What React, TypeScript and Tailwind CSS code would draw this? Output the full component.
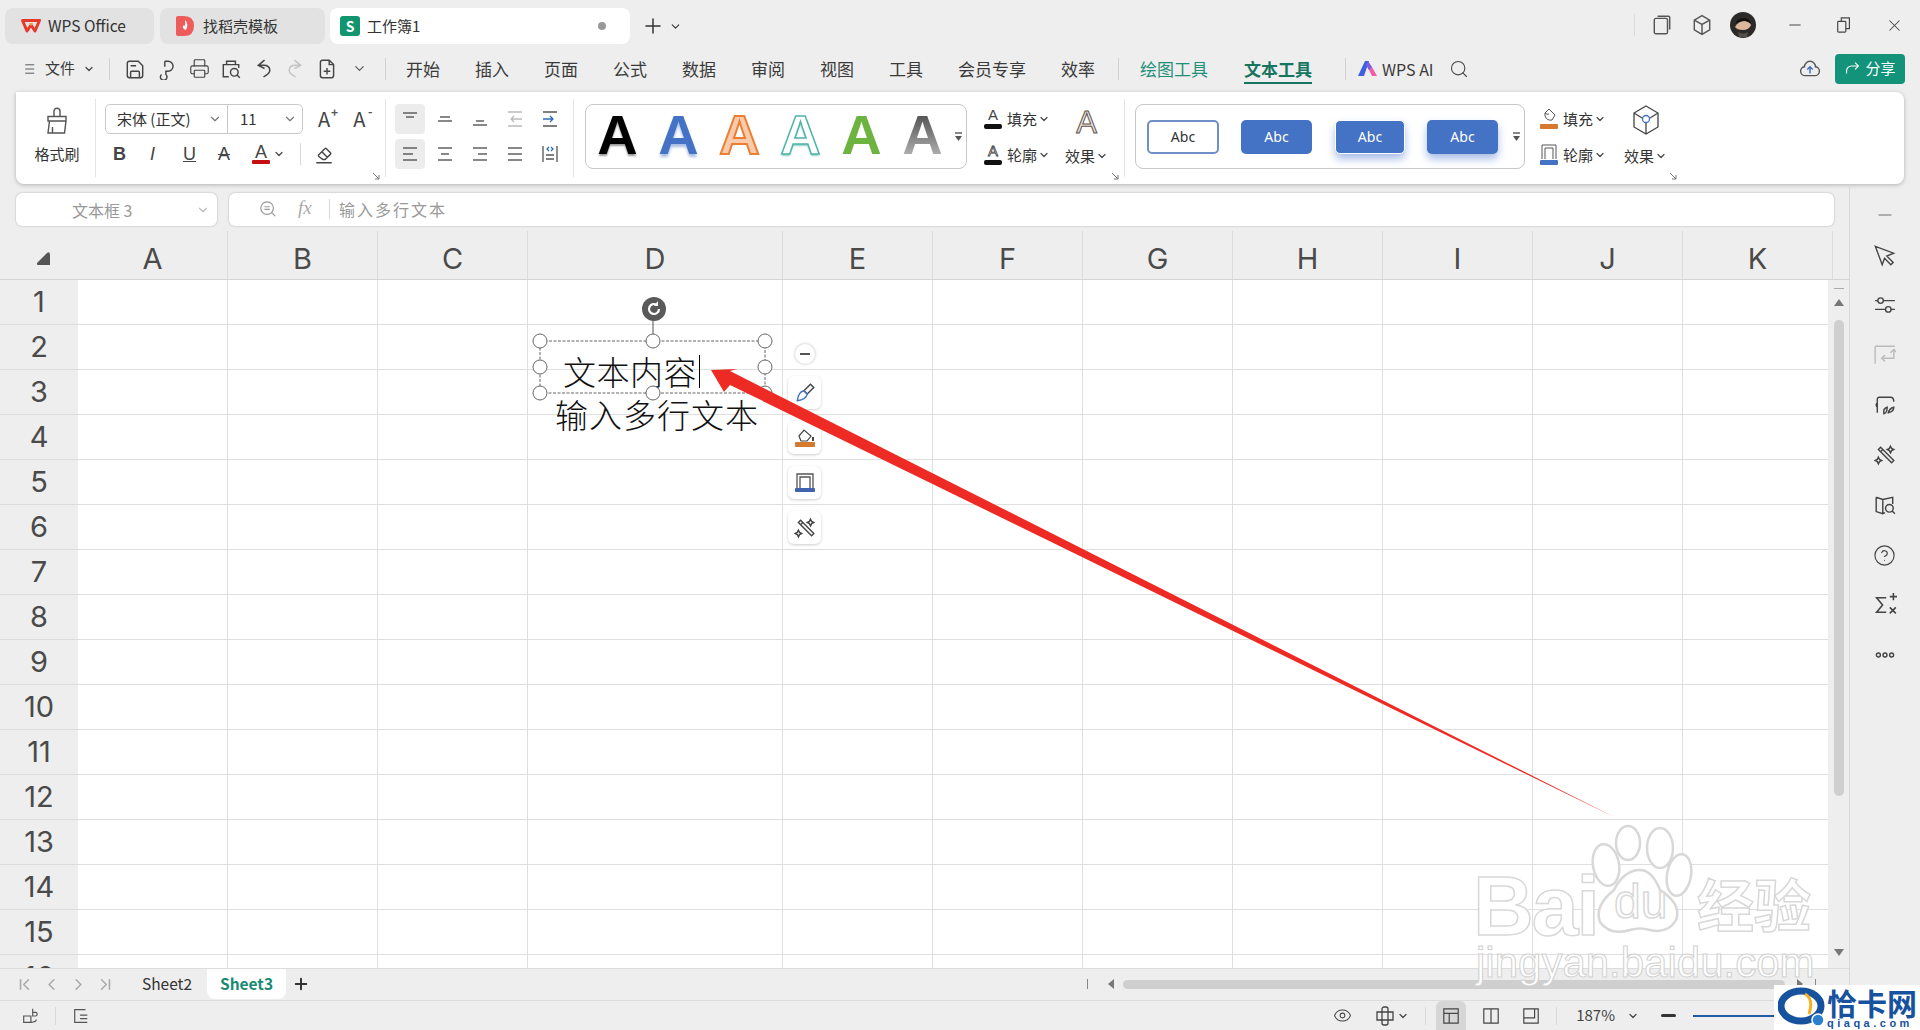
import type { ReactNode } from "react";
import { ChevronDown, Plus, Search, Eye, X, Minus, Printer, CircleHelp, ChevronLeft, ChevronRight, ChevronFirst, ChevronLast } from "lucide-react";

const CJK = "font-['Noto_Sans_CJK_SC','Noto_Sans',sans-serif]";

function Ico({ size = 20, children, className, stroke = "#444", sw = 1.3 }: { size?: number; children: ReactNode; className?: string; stroke?: string; sw?: number }) {
  return (
    <svg width={size} height={size} viewBox="0 0 20 20" fill="none" stroke={stroke} strokeWidth={sw} className={className}>
      {children}
    </svg>
  );
}

// stacked horizontal strokes used by all the alignment buttons
function Lines({ rows, stroke = "#555" }: { rows: [number, number, number][]; stroke?: string }) {
  return (
    <Ico size={20} stroke={stroke} sw={1.4}>
      {rows.map(([a, y, b], i) => (
        <line key={i} x1={a} x2={b} y1={y} y2={y} />
      ))}
    </Ico>
  );
}

function Tiny({ className = "" }: { className?: string }) {
  return <ChevronDown size={12} strokeWidth={2.4} className={"text-[#444] " + className} />;
}

function Launcher({ className = "right-[4px]" }: { className?: string }) {
  return (
    <svg width="9" height="9" viewBox="0 0 9 9" fill="none" stroke="#777" strokeWidth="1" className={"absolute -bottom-[4px] " + className}>
      <path d="M1 1l6 6M7 3v4H3" />
    </svg>
  );
}

// the little "more styles" control at the right end of a gallery box
function GalleryMore() {
  return (
    <svg width="9" height="10" viewBox="0 0 9 10" className="absolute right-[3px] top-[27px]">
      <path d="M1 1h7" stroke="#555" strokeWidth="1.4" />
      <path d="M1 4h7L4.500 9z" fill="#555" />
    </svg>
  );
}

const COLUMNS = [
  { label: "A", cls: "w-[150px]" },
  { label: "B", cls: "w-[150px]" },
  { label: "C", cls: "w-[150px]" },
  { label: "D", cls: "w-[255px]" },
  { label: "E", cls: "w-[150px]" },
  { label: "F", cls: "w-[150px]" },
  { label: "G", cls: "w-[150px]" },
  { label: "H", cls: "w-[150px]" },
  { label: "I", cls: "w-[150px]" },
  { label: "J", cls: "w-[150px]" },
  { label: "K", cls: "w-[150px]" },
];
const ROWS = Array.from({ length: 16 }, (_, i) => i + 1);
const MENU = ["开始", "插入", "页面", "公式", "数据", "审阅", "视图", "工具", "会员专享", "效率"];

function TitleBar() {
  return (
    <div className="flex h-[50px] shrink-0 items-start pl-[5px] pt-2">
      <div className="flex h-9 w-[149px] items-center rounded-lg bg-[#e2e2e2] pl-4 text-[15.5px] text-[#333]">
        <svg width="20" height="14" viewBox="0 0 20 14" fill="none" className="mr-[7px]">
          <path d="M1.500 1.500L6 12l4-6 4 6 4.500-10.500z" stroke="#e5392b" strokeWidth="3" strokeLinejoin="round" />
          <path d="M8 4h4l-2 3z" fill="#f4a23b" />
        </svg>
        WPS Office
      </div>
      <div className="ml-[6px] flex h-9 w-[165px] items-center rounded-lg bg-[#e2e2e2] pl-4 text-[15px] text-[#333]">
        <svg width="18" height="20" viewBox="0 0 18 20" className="mr-[9px]">
          <path d="M0 2q0-2 2-2h6q10 0 10 10T8 20H2q-2 0-2-2z" fill="#ee5b5b" />
          <path d="M9 4q4 4 1 10-4-1-3-5 1 1 1 2 2-3 1-7" fill="#fff" />
        </svg>
        找稻壳模板
      </div>
      <div className="ml-[5px] flex h-9 w-[300px] items-center rounded-lg bg-white pl-[10px] text-[15px] text-[#333]">
        <span className="mr-[7px] flex h-5 w-5 items-center justify-center rounded-[3px] bg-[#11956f] text-[14px] font-bold leading-none text-white">S</span>
        工作簿1
        <span className="ml-[178px] h-2 w-2 rounded-full bg-[#999]" />
      </div>
      <div className="ml-[11px] flex h-9 items-center text-[#333]">
        <Plus size={24} strokeWidth={1.5} />
        <ChevronDown size={13} strokeWidth={2} className="ml-[4px]" />
      </div>
      <div className="ml-auto flex h-[34px] items-center pr-4">
        <div className="mr-4 h-[22px] w-px bg-[#dcdcdc]" />
        <Ico size={22} stroke="#555" className="mr-[18px]">
          <rect x="3" y="4" width="12" height="14" rx="1.5" />
          <path d="M6 2h10q1 0 1 1v11" />
        </Ico>
        <Ico size={22} stroke="#555" className="mr-[17px]">
          <path d="M10 1.500l7 4v9l-7 4-7-4v-9zM3 5.500l7 4 7-4M10 9.500v9" />
        </Ico>
        <svg width="26" height="26" viewBox="0 0 26 26" className="mr-[30px]">
          <circle cx="13" cy="13" r="13" fill="#2c2a28" />
          <path d="M5 15q3-6 10-6 5 0 6 4-2 5-8 5-6 0-8-3z" fill="#dcb79c" />
          <path d="M5 12q3-7 10-6 5 1 6 6-6-4-9-3-4 1-7 3z" fill="#141210" />
          <path d="M8 20q5 3 10 0l-1 5H9z" fill="#55504a" />
        </svg>
        <Minus size={18} strokeWidth={1.3} className="mr-[31px] text-[#444]" />
        <Ico size={18} stroke="#444" className="mr-[32px]">
          <rect x="3" y="6" width="9" height="12" rx="1" />
          <path d="M7 6V2h9v12h-4" />
        </Ico>
        <X size={19} strokeWidth={1.3} className="text-[#444]" />
      </div>
    </div>
  );
}

function MenuBar() {
  return (
    <div className="flex h-[42px] shrink-0 items-center pb-[5px] text-[17px] text-[#3a3a3a]">
      <Ico size={12} stroke="#555" sw={1.6} className="ml-[24px]">
        <path d="M2 3h15M2 10h15M2 17h15" />
      </Ico>
      <span className="ml-[9px] text-[15px]">文件</span>
      <Tiny className="ml-2" />
      <div className="ml-[14px] mr-[9px] h-[22px] w-px bg-[#d2d2d2]" />
      <span className="flex w-[32px] justify-center">
        <Ico size={22}>
          <path d="M3 5q0-2 2-2h8l4 4v9q0 2-2 2H5q-2 0-2-2zM6 18v-5q0-1 1-1h6q1 0 1 1v5M6 7h5" />
        </Ico>
      </span>
      <span className="flex w-[32px] justify-center">
        <Ico size={22}>
          <path d="M8 3h3a4 4 0 010 9H9v3a3 3 0 11-4 0M8 3v5" />
        </Ico>
      </span>
      <span className="flex w-[32px] justify-center">
        <Printer size={21} strokeWidth={1.3} color="#444" />
      </span>
      <span className="flex w-[32px] justify-center">
        <Ico size={22}>
          <path d="M6 6V3h8v3M8 17H3V6h14v3" />
          <circle cx="13" cy="13" r="3.500" />
          <path d="M15.500 15.500L18 18" />
        </Ico>
      </span>
      <span className="flex w-[32px] justify-center">
        <Ico size={21} sw={1.4}>
          <path d="M11 2L5 7l6 3M5 7h5q6 0 6 5 0 3-6 6" />
        </Ico>
      </span>
      <span className="flex w-[32px] justify-center">
        <Ico size={21} sw={1.4} stroke="#c4c4c4">
          <path d="M9 2l6 5-6 3M15 7h-5q-6 0-6 5 0 3 6 6" />
        </Ico>
      </span>
      <span className="flex w-[32px] justify-center">
        <Ico size={22}>
          <path d="M4 4q0-2 2-2h6l4 4v10q0 2-2 2H6q-2 0-2-2zM12 2v4h4M10 9v6M7 12h6" />
        </Ico>
      </span>
      <span className="flex w-[32px] justify-center">
        <ChevronDown size={15} color="#555" strokeWidth={1.8} />
      </span>
      <div className="ml-[10px] mr-[20px] h-[22px] w-px bg-[#d2d2d2]" />
      <div className="flex items-center gap-[35px]">
        {MENU.map((m) => (
          <span key={m}>{m}</span>
        ))}
      </div>
      <div className="ml-[23px] mr-[21px] h-[22px] w-px bg-[#d2d2d2]" />
      <span className="text-[#1f8f78]">绘图工具</span>
      <span className="relative ml-[36px] font-bold text-[#17755f]">
        文本工具
        <span className="absolute -bottom-[3px] left-0 h-[2px] w-full bg-[#17755f]" />
      </span>
      <div className="ml-[33px] mr-[12px] h-[22px] w-px bg-[#d2d2d2]" />
      <svg width="19" height="15" viewBox="0 0 19 15" className="mr-[5px]">
        <path d="M0 15L7 0h4L6 15z" fill="#3d5fe0" />
        <path d="M9 5l5 10h5l-5-9z" fill="#ef5fa7" />
        <path d="M8 4l2-4 4 6-3 3z" fill="#7c5ce0" />
      </svg>
      <span className="text-[16px]">WPS AI</span>
      <Search size={20} strokeWidth={1.3} className="ml-[15px] text-[#444]" />
      <div className="ml-auto flex items-center pr-[15px]">
        <Ico size={22} stroke="#555" className="mr-[14px]">
          <path d="M6 16a4 4 0 01-1-8 5 5 0 0110 0 4 4 0 01-1 8z" />
          <path d="M10 14V8M7.500 10.500L10 8l2.500 2.500" stroke="#3f6fc4" />
        </Ico>
        <div className="flex h-[30px] w-[70px] items-center justify-center rounded-[4px] bg-[#12937a] text-[15px] text-white">
          <Ico size={17} stroke="#fff" className="mr-1">
            <path d="M13 3l4 4-4 4M17 7H9a6 6 0 00-6 6v3" />
          </Ico>
          分享
        </div>
      </div>
    </div>
  );
}

function FontGroup() {
  return (
    <div className="relative w-[290px] shrink-0 border-r border-[#e4e4e4] pl-[9px]">
      <div className="flex items-center pt-[5px]">
        <div className="flex h-[30px] w-[198px] items-center rounded-[5px] border border-[#c8c8c8] text-[15px] text-[#333]">
          <div className="flex h-full w-[122px] items-center justify-between border-r border-[#c8c8c8] pl-[11px] pr-[5px]">
            宋体 (正文)
            <ChevronDown size={14} color="#777" />
          </div>
          <div className="flex flex-1 items-center justify-between pl-[12px] pr-[5px]">
            11
            <ChevronDown size={14} color="#777" />
          </div>
        </div>
        <span className="relative ml-[15px] text-[20px] leading-none text-[#444]">
          A<span className="absolute -right-[8px] -top-[3px] text-[12px] font-bold text-[#555]">+</span>
        </span>
        <span className="relative ml-[23px] text-[20px] leading-none text-[#444]">
          A<span className="absolute -right-[7px] -top-[4px] text-[12px] font-bold text-[#555]">-</span>
        </span>
      </div>
      <div className="mt-[5px] flex h-[30px] items-center font-['Liberation_Sans',sans-serif] text-[18px] text-[#444]">
        <span className="ml-[8px] w-[18px] font-bold">B</span>
        <span className="ml-[19px] w-[14px] italic">I</span>
        <span className="ml-[19px] w-[14px] underline">U</span>
        <span className="ml-[21px] w-[14px] line-through">A</span>
        <span className="ml-[21px] flex w-[16px] flex-col items-center leading-[16px]">
          A<span className="h-[4px] w-[18px] rounded-[1px] bg-[#c60f13]" />
        </span>
        <Tiny className="ml-[4px]" />
        <div className="ml-[15px] mr-[12px] h-[22px] w-px bg-[#d8d8d8]" />
        <Ico size={22} stroke="#444">
          <path d="M5 11l6-6a1 1 0 011 0l4 4a1 1 0 010 1l-5 5H9l-4-3zM3 18h14M8 8l5 5" />
        </Ico>
      </div>
      <Launcher />
    </div>
  );
}

function AlignGroup() {
  return (
    <div className="w-[188px] shrink-0 border-r border-[#e4e4e4] pl-[9px] pt-[5px]">
      <div className="flex h-[30px] items-center">
        <span className="flex h-[30px] w-[30px] items-center justify-center rounded-[4px] bg-[#ececec]"><Lines rows={[[3, 4, 17], [6, 8, 14]]} /></span>
        <span className="ml-[4px] flex w-[32px] justify-center"><Lines rows={[[5, 8, 15], [3, 12, 17]]} /></span>
        <span className="ml-[3px] flex w-[32px] justify-center"><Lines rows={[[6, 12, 14], [3, 16, 17]]} /></span>
        <span className="ml-[3px] flex w-[32px] justify-center"><Ico stroke="#bbb"><path d="M3 3h14M3 17h14M17 10H6M9 7l-3 3 3 3" /></Ico></span>
        <span className="ml-[3px] flex w-[32px] justify-center"><Ico stroke="#555"><path d="M3 3h14M3 17h14" /><path d="M3 10h10M10 7l3 3-3 3" stroke="#2f6cb8" /></Ico></span>
      </div>
      <div className="mt-[5px] flex h-[30px] items-center">
        <span className="flex h-[30px] w-[30px] items-center justify-center rounded-[4px] bg-[#ececec]"><Lines rows={[[3, 4, 17], [3, 10, 13], [3, 16, 17]]} /></span>
        <span className="ml-[4px] flex w-[32px] justify-center"><Lines rows={[[3, 4, 17], [6, 10, 14], [3, 16, 17]]} /></span>
        <span className="ml-[3px] flex w-[32px] justify-center"><Lines rows={[[3, 4, 17], [8, 10, 17], [3, 16, 17]]} /></span>
        <span className="ml-[3px] flex w-[32px] justify-center"><Lines rows={[[3, 4, 17], [3, 10, 17], [3, 16, 17]]} /></span>
        <span className="ml-[3px] flex w-[32px] justify-center"><Ico stroke="#555"><path d="M3 2v16M17 2v16M6 11h8M6 15h8" /><path d="M9 3L7 5l2 2M11 3l2 2-2 2" stroke="#2f6cb8" /></Ico></span>
      </div>
    </div>
  );
}

function SmallAction({ label, icon }: { label: string; icon: ReactNode }) {
  return (
    <div className="flex h-[30px] items-center text-[15px] text-[#333]">
      <span className="flex w-[22px] justify-center">{icon}</span>
      <span className="ml-[3px]">{label}</span>
      <Tiny className="ml-[1px]" />
    </div>
  );
}

function TextStyles() {
  const a = "w-[61px] text-center font-['Liberation_Sans',sans-serif] text-[56px] font-bold leading-[60px]";
  return (
    <div className="relative flex w-[551px] shrink-0 border-r border-[#e4e4e4] pl-[11px]">
      <div className="relative mt-[5px] flex h-[65px] w-[382px] rounded-lg border border-[#c8c8c8] pl-[1px]">
        <span className={a + " text-black [text-shadow:0_2px_2px_#999]"}>A</span>
        <span className={a + " text-[#4472c4] [text-shadow:0_3px_3px_#a9bde3]"}>A</span>
        <span className={a + " text-[#f8cbad] [-webkit-text-stroke:2px_#ed7d31]"}>A</span>
        <span className={a + " text-white [-webkit-text-stroke:1.5px_#4fb3a9] [text-shadow:0_2px_2px_#8fcfc8]"}>A</span>
        <span className={a + " text-[#6cb33f]"}>A</span>
        <span className={a + " bg-gradient-to-b from-[#3f3f3f] to-[#cfcfcf] bg-clip-text text-transparent"}>A</span>
        <GalleryMore />
      </div>
      <div className="ml-[15px] mt-[5px] flex flex-col gap-[6px] pr-[5px]">
        <SmallAction
          label="填充"
          icon={
            <svg width="20" height="24" viewBox="0 0 20 24" fill="none">
              <text x="10" y="13" textAnchor="middle" fontSize="15" fill="#444" fontFamily="Liberation Sans">A</text>
              <rect x="1" y="17" width="18" height="5" rx="2" fill="#111" />
            </svg>
          }
        />
        <SmallAction
          label="轮廓"
          icon={
            <svg width="20" height="24" viewBox="0 0 20 24" fill="none">
              <text x="10" y="13" textAnchor="middle" fontSize="15" fill="#fff" stroke="#444" strokeWidth="0.8" fontFamily="Liberation Sans">A</text>
              <rect x="1" y="17" width="18" height="5" rx="2" fill="#111" />
            </svg>
          }
        />
      </div>
      <div className="ml-[10px] mt-[5px] flex flex-col items-center text-[15px] text-[#333]">
        <span className="flex h-[36px] items-center font-['Liberation_Sans',sans-serif] text-[31px] leading-none text-[#f6e2d4] [-webkit-text-stroke:1px_#555]">A</span>
        <div className="mt-[5px] flex items-center">
          效果
          <Tiny className="ml-[1px]" />
        </div>
      </div>
      <Launcher />
    </div>
  );
}

function ShapeStyles() {
  const abc = "flex h-[34px] items-center justify-center rounded-[5px] font-['Noto_Sans',sans-serif] text-[14px]";
  return (
    <div className="relative flex flex-1 pl-[10px]">
      <div className="relative mt-[5px] flex h-[65px] w-[390px] items-center rounded-lg border border-[#c8c8c8] pl-[11px]">
        <span className={abc + " w-[72px] border-2 border-[#6f8fc7] bg-white text-[#333]"}>Abc</span>
        <span className={abc + " ml-[22px] w-[71px] bg-[#4472c4] text-white"}>Abc</span>
        <span className={abc + " ml-[23px] w-[70px] border border-white bg-[#4472c4] text-white shadow-[0_5px_8px_#a9bde8]"}>Abc</span>
        <span className={abc + " ml-[22px] w-[71px] bg-[#4472c4] text-white shadow-[0_5px_8px_#a9bde8]"}>Abc</span>
        <GalleryMore />
      </div>
      <div className="ml-[13px] mt-[5px] flex flex-col gap-[6px]">
        <SmallAction
          label="填充"
          icon={
            <svg width="20" height="24" viewBox="0 0 20 24" fill="none" stroke="#555">
              <path d="M6 6l4-4 6 6-3 5q-5 1-7-4zM6 6q2 2 4 1" />
              <rect x="1" y="17" width="18" height="5" fill="#d67a30" stroke="none" rx="1" />
            </svg>
          }
        />
        <SmallAction
          label="轮廓"
          icon={
            <svg width="20" height="24" viewBox="0 0 20 24" fill="none" stroke="#555">
              <path d="M3 16V2h14v14M6 16V5h8v11" />
              <rect x="1" y="17" width="18" height="5" fill="#4472c4" stroke="none" rx="1" />
            </svg>
          }
        />
      </div>
      <div className="ml-[18px] mt-[5px] flex flex-col items-center text-[15px] text-[#333]">
        <svg width="28" height="30" viewBox="0 0 28 30" fill="none" stroke="#444" strokeWidth="1.3" className="mt-[1px]">
          <path d="M14 1l12 7v14l-12 7-12-7V8zM14 29V18M2 8l8 5M26 8l-8 5" />
          <circle cx="14" cy="14" r="3.500" stroke="#4472c4" />
        </svg>
        <div className="mt-[10px] flex items-center">
          效果
          <Tiny className="ml-[1px]" />
        </div>
      </div>
      <Launcher className="right-[226px]" />
    </div>
  );
}

function Ribbon() {
  return (
    <div className="mx-4 flex h-[92px] shrink-0 rounded-b-lg rounded-tr-lg bg-white py-[7px] shadow-[0_1px_4px_rgba(0,0,0,0.25)]">
      <div className="flex w-[80px] shrink-0 flex-col items-center border-r border-[#e4e4e4] pl-[3px] pt-[7px] text-[15px] text-[#333]">
        <Ico size={30} stroke="#555" sw={0.95}>
          <path d="M8 7V3.500a2 2 0 014 0V7M4 7h12v3H4zM5 10l-1 8h11l1-8M7 14v4" />
        </Ico>
        <span className="mt-[7px]">格式刷</span>
      </div>
      <FontGroup />
      <AlignGroup />
      <TextStyles />
      <ShapeStyles />
    </div>
  );
}

function FormulaBar() {
  return (
    <div className="flex h-[47px] shrink-0 pl-4 pt-[9px]">
      <div className="flex h-[33px] w-[201px] items-center justify-between rounded-md bg-white pl-[56px] pr-[7px] text-[16px] text-[#999] shadow-[0_0_2px_rgba(0,0,0,0.3)]">
        文本框 3
        <ChevronDown size={14} color="#bbb" />
      </div>
      <div className="ml-[12px] flex h-[33px] w-[1605px] items-center rounded-md bg-white pb-[2px] pl-[30px] text-[16px] tracking-[2px] text-[#999] shadow-[0_0_2px_rgba(0,0,0,0.3)]">
        <Ico size={18} stroke="#999">
          <circle cx="9" cy="9" r="7" />
          <path d="M6 7.500h6M6 10.500h6M14 14l4 4" />
        </Ico>
        <span className="ml-[21px] w-[26px] font-['Liberation_Serif',serif] text-[19px] italic tracking-normal text-[#aaa]">fx</span>
        <span className="ml-[5px] mr-[9px] h-[20px] w-px bg-[#d8d8d8]" />
        输入多行文本
      </div>
    </div>
  );
}

function Sheet() {
  return (
    <div className="flex min-h-0 flex-1 flex-col">
      <div className="flex h-[48px] shrink-0 font-['Inter',sans-serif] text-[29px] text-[#4a4a4a]">
        <div className="flex w-[78px] shrink-0 items-end justify-center pb-[14px] pl-[9px]">
          <svg width="13" height="13" viewBox="0 0 13 13"><path d="M0 11L10 1q3-2 3 2v10H2q-3 0-2-2z" fill="#555" /></svg>
        </div>
        {COLUMNS.map((c) => (
          <div key={c.label} className={c.cls + " flex shrink-0 items-center justify-center border-r border-[#dcdcdc] pt-[8px]"}>
            {c.label}
          </div>
        ))}
      </div>
      <div className="relative min-h-0 flex-1 overflow-hidden border-t border-[#d4d4d4]">
        {ROWS.map((r) => (
          <div key={r} className="flex h-[45px]">
            <div className="flex w-[78px] shrink-0 items-center justify-center border-b border-[#dcdcdc] font-['Inter',sans-serif] text-[29px] text-[#4a4a4a]">{r}</div>
            {COLUMNS.map((c) => (
              <div key={c.label} className={c.cls + " shrink-0 border-b border-r border-[#dfdfdf] bg-white"} />
            ))}
          </div>
        ))}
        {/* vertical scrollbar strip lies over the end of column K */}
        <div className="absolute bottom-0 left-[1828px] top-0 w-[21px] bg-[#eeeeee]">
          <div className="mx-auto mt-[8px] h-px w-[10px] bg-[#aaa]" />
          <div className="mx-auto mt-[10px] h-0 w-0 border-x-[5px] border-b-[7px] border-x-transparent border-b-[#777]" />
          <div className="mx-auto mt-[14px] h-[476px] w-[10px] rounded-full bg-[#cfcfcf]" />
          <div className="absolute bottom-[12px] left-[6px] h-0 w-0 border-x-[5px] border-t-[7px] border-x-transparent border-t-[#777]" />
        </div>
      </div>
    </div>
  );
}

function SheetBar() {
  return (
    <div className="flex h-[32px] shrink-0 items-start border-t border-[#dcdcdc] text-[15.5px] text-[#333]">
      <div className="flex h-[30px] w-[127px] items-center justify-between pl-[15px] pr-[12px] text-[#aaa]">
        <ChevronFirst size={19} strokeWidth={2} />
        <ChevronLeft size={19} strokeWidth={2} />
        <ChevronRight size={19} strokeWidth={2} />
        <ChevronLast size={19} strokeWidth={2} />
      </div>
      <span className="flex h-[30px] w-[80px] items-center justify-center">Sheet2</span>
      <span className="flex h-[30px] w-[79px] items-center justify-center rounded-b-lg bg-white font-bold text-[#1a8a72]">Sheet3</span>
      <Plus size={18} strokeWidth={2.6} className="ml-[6px] mt-[6px] text-[#333]" />
      <div className="ml-[777px] mt-[10px] h-[10px] w-px bg-[#888]" />
      <div className="ml-[20px] mt-[10px] h-0 w-0 border-y-[5px] border-r-[6px] border-y-transparent border-r-[#777]" />
      <div className="ml-[9px] mt-[11px] h-[9px] w-[662px] rounded-full bg-[#cfcfcf]" />
      <div className="ml-[12px] mt-[10px] h-0 w-0 border-y-[5px] border-l-[6px] border-y-transparent border-l-[#777]" />
      <div className="ml-[12px] mt-[10px] h-[10px] w-px bg-[#888]" />
    </div>
  );
}

function SideBar() {
  const icons: ReactNode[] = [
    <Minus key="a" size={20} color="#999" />,
    <Ico key="b" size={23} sw={1.2}><path d="M2 2l16 6-6 2.500 5.500 5.500-2 2L10 12.500 8 18z" /></Ico>,
    <Ico key="c" size={22}><path d="M1 6h18M1 14h18" /><circle cx="6" cy="6" r="2.500" fill="#eee" /><circle cx="13" cy="14" r="2.500" fill="#eee" /></Ico>,
    <Ico key="d" size={22} stroke="#bbb"><path d="M1 2h18M1 2v16M18 6v7H7M10 10l-3 3 3 3M15 8l3-3 3 3" /></Ico>,
    <Ico key="e" size={22}><path d="M3 17V5q0-2 2-2h10q3 0 3 4M3 8q-2 2 0 4M9 18q-1-5 3-6 0 5-3 6zM13 17q1-4 5-5 0 4-5 5z" /></Ico>,
    <Ico key="f" size={22}><path d="M4 5l2-2 12 12-2 2zM8 5l-2 2M15 2l1 2 2 1-2 1-1 2-1-2-2-1 2-1zM4 12l1 2 2 1-2 1-1 2-1-2-2-1 2-1z" /></Ico>,
    <Ico key="g" size={22}><path d="M2 3l6 2 9-2v6M10 17l-2 1-6-2V3M8 5v13" /><circle cx="14" cy="13" r="3.500" /><path d="M16.500 15.500L19 18" /></Ico>,
    <CircleHelp key="h" size={23} strokeWidth={1.2} color="#444" />,
    <Ico key="i" size={24}><path d="M11 4H3l5 6-5 6h8M14 3h6M17 0v6M14 12l5 5M19 12l-5 5" /></Ico>,
    <Ico key="j" size={22}><circle cx="4" cy="10" r="1.800" /><circle cx="10" cy="10" r="1.800" /><circle cx="16" cy="10" r="1.800" /></Ico>,
  ];
  return (
    <div className="flex w-[71px] shrink-0 flex-col items-center border-l border-[#d8d8d8] pt-[16px]">
      {icons.map((ic, i) => (
        <div key={i} className="flex h-[50px] w-full items-center justify-center pr-[1px] first:h-[30px]">
          {ic}
        </div>
      ))}
    </div>
  );
}

function StatusBar() {
  return (
    <div className="flex h-[30px] shrink-0 items-center border-t border-[#dcdcdc] text-[15px] text-[#444]">
      <Ico size={18} stroke="#555" className="ml-[21px]"><path d="M3 10h8v7H3zM13 2v8h3a2 2 0 000-4h-3M11 17q6 0 6-3" /></Ico>
      <div className="ml-[16px] mr-[16px] h-[18px] w-px bg-[#d8d8d8]" />
      <Ico size={18} stroke="#555"><path d="M15 3H3v14h12M9 9h8M9 13h8M9 17h8" /></Ico>
      <div className="ml-auto flex h-full items-center pr-[146px]">
        <Eye size={19} strokeWidth={1.3} className="mr-[23px]" />
        <Ico size={20} className="mr-[2px]"><rect x="7" y="1" width="6" height="18" rx="2" /><path d="M2 6h16v8H2z" /></Ico>
        <Tiny className="mr-[16px]" />
        <div className="h-[18px] w-px bg-[#d8d8d8]" />
        <span className="ml-[10px] flex h-full w-[30px] items-center justify-center rounded-t-md bg-[#d6d6d6]">
          <Ico size={18}><path d="M2 2h16v16H2zM2 7h16M8 7v11" /></Ico>
        </span>
        <span className="ml-[10px] flex w-[30px] justify-center"><Ico size={18}><path d="M2 2h16v16H2zM10 2v16" /></Ico></span>
        <span className="ml-[10px] flex w-[30px] justify-center"><Ico size={18}><path d="M2 2h16v16H2zM14 2v10H2" /></Ico></span>
        <div className="ml-[10px] h-[18px] w-px bg-[#d8d8d8]" />
        <span className="ml-[19px] text-[15px]">187%</span>
        <Tiny className="ml-[12px]" />
        <span className="ml-[22px] h-[3px] w-[15px] rounded bg-[#333]" />
        <span className="ml-[17px] h-[2px] w-[81px] bg-[#1d5aa8]" />
      </div>
    </div>
  );
}

// selection frame, arrow annotation and the paw of the watermark, all lying over the sheet
function Overlay() {
  const handles = [
    [540, 341], [653, 341], [765, 341],
    [540, 367], [765, 367],
    [540, 393], [653, 393], [765, 393],
  ];
  return (
    <svg width="1920" height="1030" viewBox="0 0 1920 1030" fill="none" className="pointer-events-none absolute left-0 top-0">
      <rect x="540" y="341" width="225" height="52" stroke="#666" strokeWidth="1" strokeDasharray="3 1.5" />
      <line x1="653" x2="653" y1="320" y2="341" stroke="#555" />
      <circle cx="654" cy="309" r="12" fill="#5a5a5a" />
      <path d="M659 309a5 5 0 11-2-4" stroke="#fff" strokeWidth="2.2" />
      <path d="M658 301v5h-4z" fill="#fff" />
      {handles.map(([x, y]) => (
        <circle key={x + "-" + y} cx={x} cy={y} r="7" fill="#fff" stroke="#666" />
      ))}
      <g stroke="#d8d8d8" strokeWidth="2.5" fill="#fff">
        <ellipse cx="1606" cy="865" rx="13" ry="21" transform="rotate(-10 1606 865)" />
        <ellipse cx="1628" cy="843" rx="12" ry="17" />
        <ellipse cx="1660" cy="848" rx="13" ry="20" />
        <ellipse cx="1679" cy="875" rx="12" ry="21" transform="rotate(10 1679 875)" />
        <path d="M1640 870q12 0 20 20 22 14 16 30-8 14-26 10-10-3-20 0-20 6-30-8-6-16 14-32 10-20 26-20z" />
      </g>
      <path d="M711 370L737 369 730 371 1616 818 730 385 724 392z" fill="#ee2a24" />
    </svg>
  );
}

function Floating() {
  const box = "mt-[12px] flex h-[33px] w-[33px] items-center justify-center rounded-md bg-white shadow-[0_1px_3px_rgba(0,0,0,0.2)]";
  return (
    <div className="absolute left-[788px] top-[344px] flex flex-col items-center">
      <div className="flex h-5 w-5 items-center justify-center rounded-full bg-white shadow-[0_0_3px_rgba(0,0,0,0.3)]">
        <span className="h-[2px] w-[10px] bg-[#555]" />
      </div>
      <div className={box}>
        <Ico size={22} stroke="#444"><path d="M15 2l3 3-6 6-3-3z" /><path d="M9 8q-5 1-6 9 8-1 9-6z" stroke="#4472c4" /></Ico>
      </div>
      <div className={box}>
        <svg width="22" height="22" viewBox="0 0 22 22" fill="none" stroke="#444" strokeWidth="1.2"><path d="M5 9l5-6 7 6-4 5H7z" /><path d="M19 10v4" strokeWidth="2" /><rect x="1" y="15" width="20" height="5" rx="1" fill="#d67a30" stroke="none" /></svg>
      </div>
      <div className={box}>
        <svg width="22" height="22" viewBox="0 0 22 22" fill="none" stroke="#555" strokeWidth="1.3"><path d="M3 16V2h16v14M6 16V5h10v11" /><rect x="1" y="16" width="20" height="4" rx="1" fill="#3f63ae" stroke="none" /></svg>
      </div>
      <div className={box}>
        <Ico size={22} stroke="#444"><path d="M4 5l2-2 12 12-2 2zM8 5l-2 2M15 2l1 2 2 1-2 1-1 2-1-2-2-1 2-1zM4 12l1 2 2 1-2 1-1 2-1-2-2-1 2-1z" /></Ico>
      </div>
    </div>
  );
}

export default function App() {
  return (
    <div className={CJK + " relative flex h-[1030px] w-[1920px] flex-col overflow-hidden bg-[#eeeeee]"}>
      <TitleBar />
      <MenuBar />
      <Ribbon />
      <div className="flex min-h-0 flex-1">
        <div className="flex w-[1849px] shrink-0 flex-col overflow-hidden">
          <FormulaBar />
          <Sheet />
          <SheetBar />
        </div>
        <SideBar />
      </div>
      <StatusBar />

      <span className="absolute left-[563px] top-[349px] text-[33px] font-light leading-[44px] tracking-[0.5px] text-[#111]">文本内容</span>
      <span className="absolute left-[699px] top-[355px] h-[33px] w-px bg-black" />
      <span className="absolute left-[555px] top-[392px] text-[33px] font-light leading-[44px] tracking-[1px] text-[#111]">输入多行文本</span>
      <Floating />
      <Overlay />

      {/* site watermarks */}
      <span className="absolute left-[1473px] top-[858px] font-['Liberation_Sans',sans-serif] text-[84px] font-bold leading-[96px] tracking-[-2px] text-white [-webkit-text-stroke:1.5px_#d8d8d8]">Bai</span>
      <span className="absolute left-[1614px] top-[872px] font-['Liberation_Sans',sans-serif] text-[48px] leading-[60px] text-white [-webkit-text-stroke:1.5px_#d8d8d8]">du</span>
      <span className="absolute left-[1697px] top-[862px] text-[57px] font-bold leading-[80px] text-white [-webkit-text-stroke:1.5px_#d8d8d8]">经验</span>
      <span className="absolute left-[1476px] top-[938px] font-['Liberation_Sans',sans-serif] text-[42px] leading-[50px] text-white [-webkit-text-stroke:1px_#d0d0d0]">jingyan.baidu.com</span>
      <div className="absolute bottom-0 right-0 flex h-[45px] w-[146px] items-center bg-white pl-[4px]">
        <svg width="50" height="45" viewBox="0 0 50 45" fill="none">
          <ellipse cx="23" cy="21" rx="20" ry="15" stroke="#17529f" strokeWidth="7" />
          <path d="M27 9q9 5 4 20" stroke="#f4b223" strokeWidth="3" />
          <circle cx="40" cy="35" r="6" fill="#2a7fd0" stroke="#fff" strokeWidth="1.5" />
        </svg>
        <div className="-ml-[1px] flex flex-col">
          <span className="text-[30px] font-bold leading-[32px] text-[#17529f]">恰卡网</span>
          <span className="font-['Liberation_Sans',sans-serif] text-[11px] font-bold leading-[11px] tracking-[3.5px] text-[#17529f]">qiaqa.com</span>
        </div>
      </div>
    </div>
  );
}
